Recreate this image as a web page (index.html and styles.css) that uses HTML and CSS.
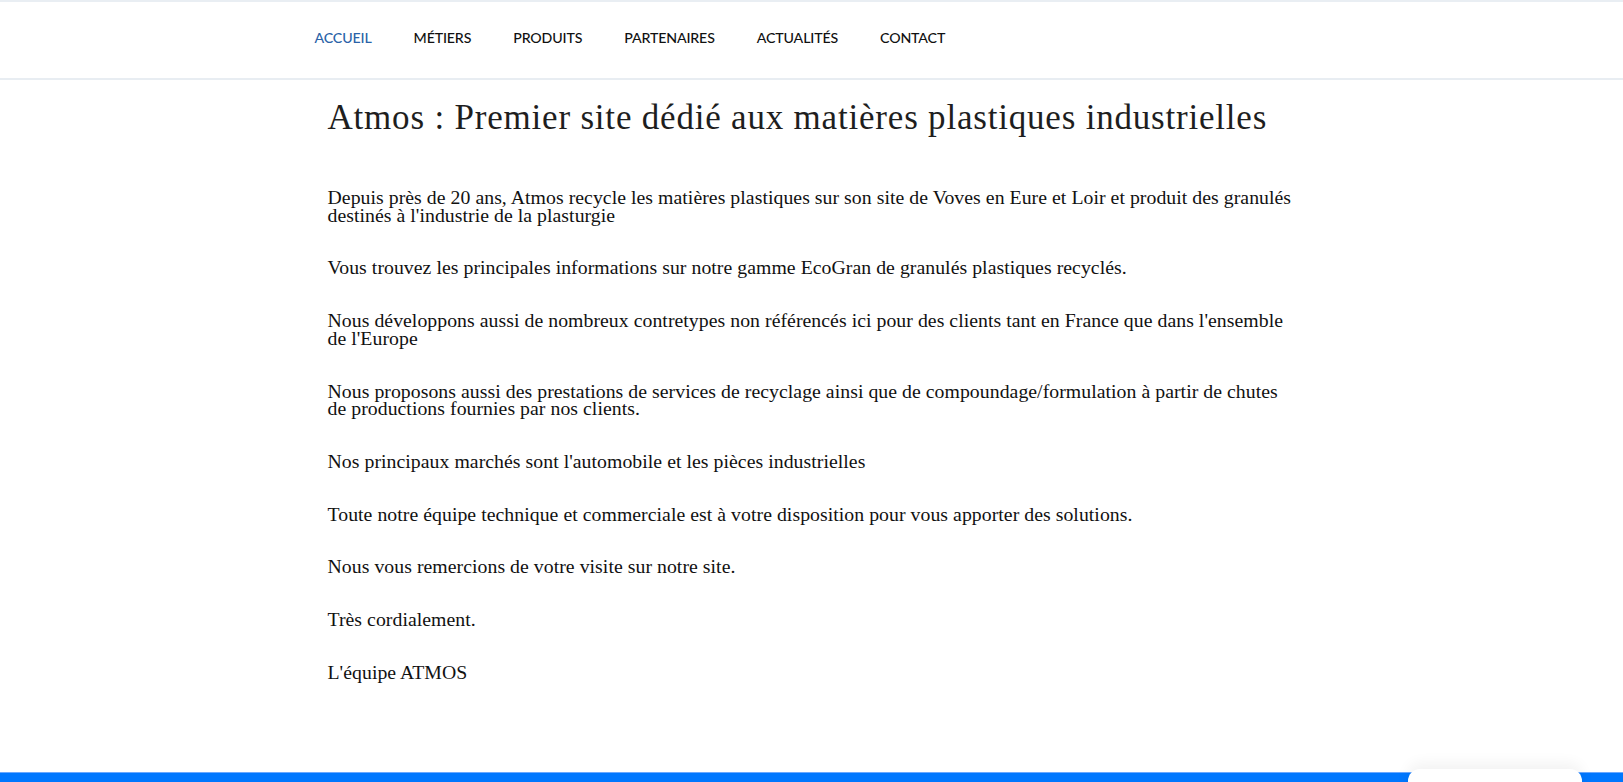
FILE: index.html
```html
<!DOCTYPE html>
<html lang="fr">
<head>
<meta charset="utf-8">
<title>Atmos</title>
<link rel="stylesheet" href="styles.css">
</head>
<body>
<header class="site-header">
  <nav class="nav">
    <a class="nav-link active" href="#">ACCUEIL</a>
    <a class="nav-link" href="#">MÉTIERS</a>
    <a class="nav-link" href="#">PRODUITS</a>
    <a class="nav-link" href="#">PARTENAIRES</a>
    <a class="nav-link" href="#">ACTUALITÉS</a>
    <a class="nav-link" href="#">CONTACT</a>
  </nav>
</header>
<main class="content">
  <h1 class="title">Atmos : Premier site dédié aux matières plastiques industrielles</h1>
  <p>Depuis près de 20 ans, Atmos recycle les matières plastiques sur son site de Voves en Eure et Loir et produit des granulés destinés à l'industrie de la plasturgie</p>
  <p>Vous trouvez les principales informations sur notre gamme EcoGran de granulés plastiques recyclés.</p>
  <p>Nous développons aussi de nombreux contretypes non référencés ici pour des clients tant en France que dans l'ensemble de l'Europe</p>
  <p>Nous proposons aussi des prestations de services de recyclage ainsi que de compoundage/formulation à partir de chutes de productions fournies par nos clients.</p>
  <p>Nos principaux marchés sont l'automobile et les pièces industrielles</p>
  <p>Toute notre équipe technique et commerciale est à votre disposition pour vous apporter des solutions.</p>
  <p>Nous vous remercions de votre visite sur notre site.</p>
  <p>Très cordialement.</p>
  <p>L'équipe ATMOS</p>
</main>
<footer class="footer"></footer>
<div class="chat-tab"></div>
</body>
</html>
```
FILE: styles.css
```css
html, body {
  margin: 0;
  padding: 0;
  background: #ffffff;
}
body {
  font-family: "Liberation Serif", "Times New Roman", serif;
  color: #111111;
}
.site-header {
  border-top: 2px solid #e9eef3;
  border-bottom: 2px solid #e8edf2;
  height: 76px;
  box-sizing: content-box;
}
.nav {
  width: 1000px;
  margin: 0 auto;
  display: flex;
  align-items: center;
  height: 76px;
  padding: 0 0 5px 3px;
  box-sizing: border-box;
  gap: 42px;
}
.nav-link {
  font-family: Lato, "Liberation Sans", sans-serif;
  font-size: 14.2px;
  font-weight: 500;
  color: #111111;
  text-decoration: none;
  letter-spacing: -0.15px;
}
.nav-link.active {
  color: #2b63a8;
}
.content {
  width: 1000px;
  margin: 0 auto;
  padding: 18px 0 0 16px;
  box-sizing: border-box;
  min-height: 692px;
}
.title {
  font-family: "Liberation Serif", "Times New Roman", serif;
  font-weight: 400;
  font-size: 35px;
  line-height: 40px;
  letter-spacing: 0.8px;
  color: #1e1e1e;
  margin: 0 0 51px 0;
  width: 975px;
}
.content p {
  font-size: 19.75px;
  line-height: 17.6px;
  letter-spacing: 0.05px;
  margin: 0 0 35.2px 0;
  width: 970px;
}
.footer {
  height: 200px;
  background: #0077fe;
  border-top: 1px solid #6aa8ff;
}
.chat-tab {
  position: fixed;
  left: 1408px;
  top: 769px;
  width: 174px;
  height: 40px;
  background: #ffffff;
  border-radius: 12px 12px 0 0;
  box-shadow: 0 -6px 14px rgba(0, 0, 0, 0.05);
}
```
